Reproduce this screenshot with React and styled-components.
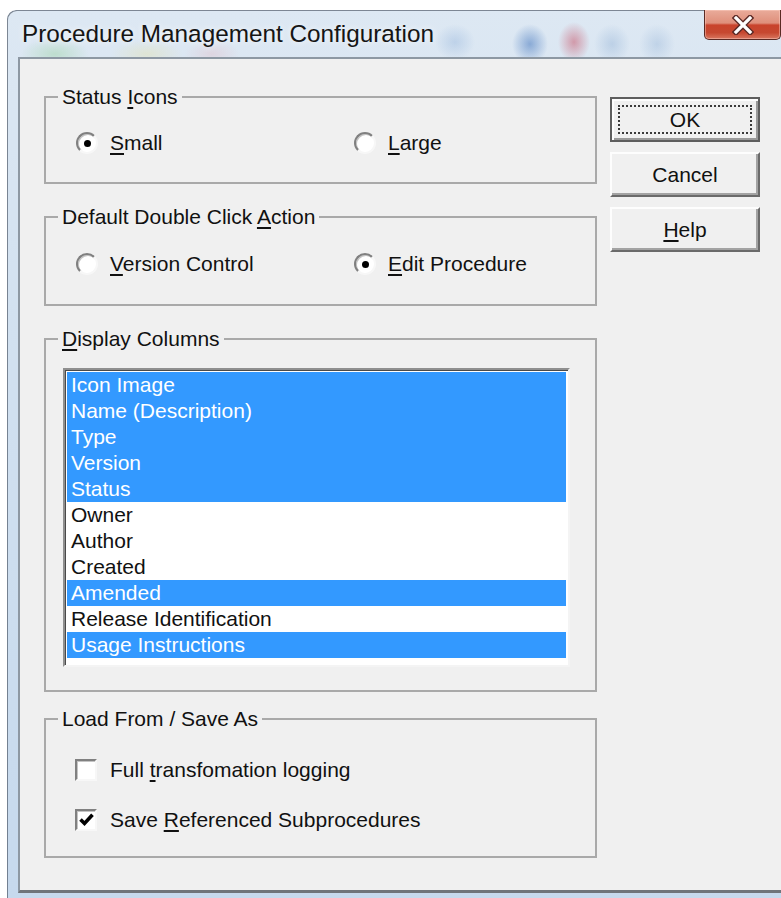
import styled, { createGlobalStyle } from 'styled-components';

const GlobalStyle = createGlobalStyle`
  html, body {
    margin: 0;
    background: #fff;
    overflow: hidden;
  }
  body {
    font-family: 'Liberation Sans', Arial, sans-serif;
    color: #111;
  }
`;

const Desktop = styled.div`
  height: 898px;
  padding: 10px 0 0 7px;
  box-sizing: border-box;
`;

const Window = styled.div`
  width: 774px;
  height: 888px;
  display: flex;
  flex-direction: column;
  border-top-left-radius: 9px;
  box-shadow: inset 1px 1px 0 rgba(45, 55, 70, 0.55);
  background:
    radial-gradient(ellipse 34px 16px at 48px 44px, rgba(120, 200, 120, 0.3), transparent),
    radial-gradient(ellipse 36px 14px at 140px 44px, rgba(230, 220, 120, 0.25), transparent),
    radial-gradient(ellipse 28px 14px at 205px 44px, rgba(230, 160, 170, 0.25), transparent),
    radial-gradient(ellipse 20px 18px at 448px 32px, rgba(120, 160, 210, 0.3), transparent),
    radial-gradient(ellipse 18px 20px at 523px 34px, rgba(70, 120, 190, 0.55), transparent),
    radial-gradient(ellipse 16px 20px at 567px 32px, rgba(200, 90, 110, 0.55), transparent),
    radial-gradient(ellipse 18px 20px at 605px 34px, rgba(150, 180, 215, 0.45), transparent),
    radial-gradient(ellipse 18px 20px at 650px 34px, rgba(150, 180, 215, 0.4), transparent),
    linear-gradient(180deg, #dde8f3 0%, #d2e1f0 35%, #c6d9ed 100%);
`;

const TitleBar = styled.header`
  height: 47px;
  flex-shrink: 0;
  display: flex;
  align-items: flex-start;
`;

const Title = styled.h1`
  margin: 0;
  align-self: center;
  padding: 1px 0 0 15px;
  font: 400 24.3px/1 'Liberation Sans', Arial, sans-serif;
  color: #151515;
  text-shadow: 0 0 6px rgba(255, 255, 255, 0.9);
`;

const CloseButton = styled.button`
  margin-left: auto;
  width: 77px;
  height: 30px;
  padding: 0;
  display: grid;
  place-items: center;
  border: 1px solid #5a2a24;
  border-top: none;
  border-radius: 0 0 5px 5px;
  background: linear-gradient(
    180deg,
    #e9ab9a 0%,
    #df8f7b 45%,
    #c9432c 52%,
    #c64830 78%,
    #d9765f 100%
  );
  box-shadow: inset 0 0 0 1px rgba(255, 210, 200, 0.45);
`;

const Client = styled.main`
  flex: 1;
  margin: 0 0 5px 11px;
  padding: 26px 0 0 24px;
  display: grid;
  grid-template-columns: 553px 150px;
  column-gap: 13px;
  align-items: start;
  background: #f0f0f0;
  border-top: 2px solid #8d98a3;
  border-left: 2px solid #8d98a3;
  border-bottom: 3px solid #6f747a;
`;

const Stack = styled.div`
  display: flex;
  flex-direction: column;
`;

const Group = styled.fieldset`
  margin: 0 0 ${({ $gap }) => $gap}px;
  padding: 0;
  min-width: 0;
  border: 2px solid #a9a9a9;
`;

const Caption = styled.legend`
  margin-left: 12px;
  padding: 0 4px;
  font-size: 21px;
  line-height: 24px;
`;

const GroupBody = styled.div`
  padding: ${({ $pad }) => $pad};
`;

const Key = styled.span`
  text-decoration: underline;
  text-decoration-thickness: 2px;
  text-underline-offset: 3px;
`;

const Choices = styled.div`
  display: grid;
  grid-template-columns: 278px auto;
`;

const Choice = styled.label`
  height: 24px;
  display: flex;
  align-items: center;
  gap: 12px;
  font-size: 21px;
`;

const RadioMark = styled.span`
  width: 22px;
  height: 22px;
  box-sizing: border-box;
  display: grid;
  place-items: center;
  border-radius: 50%;
  border: 2px solid;
  border-color: #808080 #f7f7f7 #f7f7f7 #808080;
  background: #fff;
  box-shadow: inset 1px 1px 0 #c4c4c4;

  &::after {
    content: '';
    width: 7px;
    height: 7px;
    border-radius: 50%;
    background: ${({ $on }) => ($on ? '#000' : 'transparent')};
  }
`;

const ListBox = styled.ul`
  margin: 0;
  padding: 2px 2px 7px;
  list-style: none;
  background: #fff;
  border: 2px solid;
  border-color: #8f8f8f #f4f4f4 #f4f4f4 #8f8f8f;
  box-shadow: inset 1px 1px 0 #4a4a4a;
`;

const Row = styled.li`
  height: 26px;
  line-height: 26px;
  padding-left: 4px;
  font-size: 21px;
  white-space: nowrap;
  background: ${({ $selected }) => ($selected ? '#3399ff' : 'transparent')};
  color: ${({ $selected }) => ($selected ? '#fff' : '#111')};
`;

const Checks = styled.div`
  display: flex;
  flex-direction: column;
  gap: 26px;
`;

const CheckItem = styled.label`
  height: 24px;
  display: flex;
  align-items: center;
  gap: 13px;
  font-size: 21px;
`;

const CheckMark = styled.span`
  width: 22px;
  height: 22px;
  box-sizing: border-box;
  display: grid;
  place-items: center;
  border: 2px solid;
  border-color: #808080 #f7f7f7 #f7f7f7 #808080;
  background: #fff;
  box-shadow: inset 1px 1px 0 #c4c4c4;
`;

const ButtonColumn = styled.div`
  margin-top: 12px;
  display: flex;
  flex-direction: column;
  gap: 10px;
`;

const PushButton = styled.button`
  position: relative;
  height: 45px;
  padding: 0;
  font: 21px 'Liberation Sans', Arial, sans-serif;
  color: #111;
  background: #f0f0f0;
  border: 2px solid;
  border-color: ${({ $default }) =>
    $default ? '#5e5e5e' : '#fdfdfd #6a6a6a #6a6a6a #fdfdfd'};
  box-shadow: ${({ $default }) =>
    $default
      ? 'inset 2px 2px 0 #fdfdfd, inset -2px -2px 0 #9a9a9a'
      : 'inset -2px -2px 0 #a3a3a3'};

  /* focus rectangle on the default button */
  &::after {
    content: '';
    display: ${({ $default }) => ($default ? 'block' : 'none')};
    position: absolute;
    inset: 6px;
    border: 2px dotted #3a3a3a;
  }
`;

const columns = [
  ['Icon Image', true],
  ['Name (Description)', true],
  ['Type', true],
  ['Version', true],
  ['Status', true],
  ['Owner', false],
  ['Author', false],
  ['Created', false],
  ['Amended', true],
  ['Release Identification', false],
  ['Usage Instructions', true],
];

const Tick = () => (
  <svg width="15" height="14" viewBox="0 0 15 14">
    <path d="M1.5 6.5 L5.5 10.5 L13.5 1.8" fill="none" stroke="#000" strokeWidth="3.6" />
  </svg>
);

const CloseGlyph = () => (
  <svg width="22" height="20" viewBox="0 0 22 20">
    <path d="M4 3 L18 17 M18 3 L4 17" stroke="#5b2a26" strokeWidth="6" strokeLinecap="square" />
    <path d="M4 3 L18 17 M18 3 L4 17" stroke="#fff" strokeWidth="3.2" strokeLinecap="square" />
  </svg>
);

export default function App() {
  return (
    <>
      <GlobalStyle />
      <Desktop>
        <Window>
          <TitleBar>
            <Title>Procedure Management Configuration</Title>
            <CloseButton aria-label="Close">
              <CloseGlyph />
            </CloseButton>
          </TitleBar>
          <Client>
            <Stack>
              <Group $gap={21}>
                <Caption>
                  Status <Key>I</Key>cons
                </Caption>
                <GroupBody $pad="22px 0 27px 30px">
                  <Choices>
                    <Choice>
                      <RadioMark $on />
                      <span><Key>S</Key>mall</span>
                    </Choice>
                    <Choice>
                      <RadioMark />
                      <span><Key>L</Key>arge</span>
                    </Choice>
                  </Choices>
                </GroupBody>
              </Group>

              <Group $gap={21}>
                <Caption>
                  Default Double Click <Key>A</Key>ction
                </Caption>
                <GroupBody $pad="23px 0 28px 30px">
                  <Choices>
                    <Choice>
                      <RadioMark />
                      <span><Key>V</Key>ersion Control</span>
                    </Choice>
                    <Choice>
                      <RadioMark $on />
                      <span><Key>E</Key>dit Procedure</span>
                    </Choice>
                  </Choices>
                </GroupBody>
              </Group>

              <Group $gap={15}>
                <Caption>
                  <Key>D</Key>isplay Columns
                </Caption>
                <GroupBody $pad="17px 25px 23px 17px">
                  <ListBox>
                    {columns.map(([name, selected]) => (
                      <Row key={name} $selected={selected}>
                        {name}
                      </Row>
                    ))}
                  </ListBox>
                </GroupBody>
              </Group>

              <Group $gap={0}>
                <Caption>Load From / Save As</Caption>
                <GroupBody $pad="27px 0 24px 29px">
                  <Checks>
                    <CheckItem>
                      <CheckMark />
                      <span>Full <Key>t</Key>ransfomation logging</span>
                    </CheckItem>
                    <CheckItem>
                      <CheckMark>
                        <Tick />
                      </CheckMark>
                      <span>Save <Key>R</Key>eferenced Subprocedures</span>
                    </CheckItem>
                  </Checks>
                </GroupBody>
              </Group>
            </Stack>

            <ButtonColumn>
              <PushButton $default>OK</PushButton>
              <PushButton>Cancel</PushButton>
              <PushButton>
                <Key>H</Key>elp
              </PushButton>
            </ButtonColumn>
          </Client>
        </Window>
      </Desktop>
    </>
  );
}
